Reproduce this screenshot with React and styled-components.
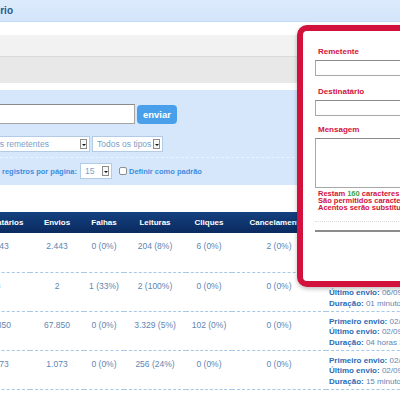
import React from "react";
import styled, { createGlobalStyle } from "styled-components";

const GlobalStyle = createGlobalStyle`
  html, body {
    margin: 0;
    padding: 0;
    background: #fff;
    overflow: hidden;
  }
  body {
    font-family: "Liberation Sans", Arial, sans-serif;
  }
`;

const rows = [
  {
    dest: "2.443",
    envios: "2.443",
    falhas: "0 (0%)",
    leituras: "204 (8%)",
    cliques: "6 (0%)",
    cancel: "2 (0%)",
    primeiro: "02/09/2013 09:12",
    ultimo: "02/09/2013 09:40",
    duracao: "28 minutos",
  },
  {
    dest: "3",
    envios: "2",
    falhas: "1 (33%)",
    leituras: "2 (100%)",
    cliques: "0 (0%)",
    cancel: "0 (0%)",
    primeiro: "06/09/2013 10:01",
    ultimo: "06/09/2013 10:02",
    duracao: "01 minutos",
  },
  {
    dest: "67.850",
    envios: "67.850",
    falhas: "0 (0%)",
    leituras: "3.329 (5%)",
    cliques: "102 (0%)",
    cancel: "0 (0%)",
    primeiro: "02/09/2013 08:00",
    ultimo: "02/09/2013 12:32",
    duracao: "04 horas 32 minutos",
  },
  {
    dest: "1.073",
    envios: "1.073",
    falhas: "0 (0%)",
    leituras: "256 (24%)",
    cliques: "0 (0%)",
    cancel: "0 (0%)",
    primeiro: "02/09/2013 14:10",
    ultimo: "02/09/2013 14:25",
    duracao: "15 minutos",
  },
];

const FakeSelect = ({ label, width, shift }) => (
  <SelectBox $width={width} $shift={shift}>
    <SelectText>{label}</SelectText>
    <SelectArrow />
  </SelectBox>
);

const App = () => {
  return (
    <Page>
      <GlobalStyle />

      <TitleBar>
        <TitleText>Relatório</TitleText>
      </TitleBar>

      <Tabs />
      <SubTabs />

      <FilterPanel>
        <SearchRow>
          <SearchInput />
          <SendButton>enviar</SendButton>
        </SearchRow>

        <SelectRow>
          <FakeSelect label="Todos os remetentes" width={125} shift={-35} />
          <FakeSelect label="Todos os tipos" width={71} />
        </SelectRow>

        <Divider />

        <PerPageRow>
          <PerPageLabel>Número de registros por página:</PerPageLabel>
          <FakeSelect label="15" width={32} />
          <Check />
          <CheckLabel>Definir como padrão</CheckLabel>
        </PerPageRow>
      </FilterPanel>

      <Table>
        <colgroup>
          <col style={{ width: 64 }} />
          <col style={{ width: 54 }} />
          <col style={{ width: 40 }} />
          <col style={{ width: 62 }} />
          <col style={{ width: 46 }} />
          <col style={{ width: 94 }} />
          <col style={{ width: 200 }} />
        </colgroup>
        <thead>
          <tr>
            <Th>Destinatários</Th>
            <Th>Envios</Th>
            <Th>Falhas</Th>
            <Th>Leituras</Th>
            <Th>Cliques</Th>
            <Th>Cancelamentos</Th>
            <Th>Informações</Th>
          </tr>
        </thead>
        <tbody>
          {rows.map((r, i) => (
            <tr key={i}>
              <Td>{r.dest}</Td>
              <Td>{r.envios}</Td>
              <Td>{r.falhas}</Td>
              <Td>{r.leituras}</Td>
              <Td>{r.cliques}</Td>
              <Td>{r.cancel}</Td>
              <InfoTd>
                <InfoLine>
                  <b>Primeiro envio:</b> {r.primeiro}
                </InfoLine>
                <InfoLine>
                  <b>Último envio:</b> {r.ultimo}
                </InfoLine>
                <InfoLine>
                  <b>Duração:</b> {r.duracao}
                </InfoLine>
              </InfoTd>
            </tr>
          ))}
        </tbody>
      </Table>

      <Modal>
        <FieldLabel>Remetente</FieldLabel>
        <TextInput />
        <FieldLabel $top={10}>Destinatário</FieldLabel>
        <TextInput />
        <FieldLabel $top={8}>Mensagem</FieldLabel>
        <MessageArea />
        <Help>
          Restam <Count>160</Count> caracteres
          <br />
          São permitidos caracteres alfanuméricos
          <br />
          Acentos serão substituídos
        </Help>
        <DottedRule />
        <SolidRule />
      </Modal>
    </Page>
  );
};

const Page = styled.div`
  position: relative;
  width: 400px;
  height: 400px;
  overflow: hidden;
`;

const TitleBar = styled.div`
  display: flex;
  align-items: center;
  height: 21px;
  background: linear-gradient(#dcebfc, #d3e5fa);
  border-bottom: 1px solid #c4daf2;
`;

const TitleText = styled.div`
  width: 100px;
  margin-left: -87px;
  text-align: right;
  white-space: nowrap;
  font-size: 10px;
  font-weight: bold;
  color: #2a5688;
`;

const Tabs = styled.div`
  margin-top: 13px;
  height: 21px;
  background: #f2f2f2;
  border-bottom: 1px solid #dadada;
`;

const SubTabs = styled.div`
  height: 26px;
  background: #e8e8e8;
  margin-bottom: 7px;
`;

const FilterPanel = styled.div`
  height: 95px;
  background: #d6e7fc;
  padding-top: 14px;
  box-sizing: border-box;
`;

const SearchRow = styled.div`
  display: flex;
  align-items: center;
  gap: 2px;
`;

const SearchInput = styled.div`
  width: 200px;
  height: 20px;
  margin-left: -65px;
  box-sizing: border-box;
  background: #fff;
  border: 1px solid #a5a5a5;
  border-top-color: #8a8a8a;
`;

const SendButton = styled.div`
  width: 40px;
  height: 19px;
  border-radius: 4px;
  background: #4a9feb;
  color: #fff;
  font-size: 9.5px;
  font-weight: bold;
  display: flex;
  align-items: center;
  justify-content: center;
`;

const SelectRow = styled.div`
  display: flex;
  gap: 2px;
  margin-top: 12px;
`;

const SelectBox = styled.div`
  display: flex;
  align-items: center;
  justify-content: space-between;
  width: ${(p) => p.$width}px;
  margin-left: ${(p) => p.$shift || 0}px;
  height: 16px;
  box-sizing: border-box;
  padding: 0 2px 0 4px;
  background: #fff;
  border: 1px solid #b3cbe4;
`;

const SelectText = styled.span`
  font-size: 8.5px;
  color: #7a9fc6;
  white-space: nowrap;
`;

const SelectArrow = styled.span`
  position: relative;
  flex: none;
  width: 7px;
  height: 10px;
  box-sizing: border-box;
  border: 1px solid #8d8d8d;
  background: #f7f7f7;
  &:after {
    content: "";
    position: absolute;
    left: 1px;
    top: 4px;
    border-left: 2px solid transparent;
    border-right: 2px solid transparent;
    border-top: 2px solid #111;
  }
`;

const Divider = styled.div`
  margin-top: 5px;
  border-top: 1px dashed #eaf3fe;
`;

const PerPageRow = styled.div`
  display: flex;
  align-items: center;
  margin-top: 5px;
`;

const PerPageLabel = styled.div`
  width: 140px;
  margin-left: -63px;
  margin-right: 3px;
  text-align: right;
  white-space: nowrap;
  font-size: 7.5px;
  font-weight: bold;
  color: #3d8de0;
`;

const Check = styled.span`
  width: 8px;
  height: 8px;
  margin-left: 7px;
  margin-right: 2px;
  box-sizing: border-box;
  border: 1px solid #8f8f8f;
  border-radius: 2px;
  background: #fff;
`;

const CheckLabel = styled.span`
  font-size: 7.5px;
  font-weight: bold;
  color: #3d8de0;
  white-space: nowrap;
`;

const Table = styled.table`
  margin-top: 27px;
  margin-left: -34px;
  border-collapse: collapse;
  table-layout: fixed;
  width: 560px;
`;

const Th = styled.th`
  height: 21px;
  padding: 0;
  background: linear-gradient(#14417f, #0a2a60);
  color: #fff;
  font-size: 8px;
  font-weight: bold;
  text-align: center;
  white-space: nowrap;
`;

const Td = styled.td`
  height: 39px;
  padding: 8px 0 0;
  vertical-align: top;
  box-sizing: border-box;
  text-align: center;
  font-size: 8.5px;
  color: #5d86b3;
  white-space: nowrap;
  border-bottom: 1px dashed #a6c8e4;
`;

const InfoTd = styled(Td)`
  text-align: left;
  padding: 5px 0 0 3px;
`;

const InfoLine = styled.div`
  font-size: 8px;
  line-height: 10.5px;
  color: #5d86b3;
  b {
    color: #2c6cb4;
  }
`;

const Modal = styled.div`
  position: absolute;
  left: 297px;
  top: 25px;
  width: 200px;
  height: 262px;
  box-sizing: border-box;
  border: 6px solid #d2123c;
  border-radius: 10px;
  background: #fff;
  padding: 15px 0 0 12px;
  box-shadow: 0 2px 4px rgba(0, 0, 0, 0.25);
`;

const FieldLabel = styled.div`
  margin-top: ${(p) => p.$top || 0}px;
  margin-bottom: 3px;
  padding-left: 3px;
  font-size: 8px;
  line-height: 11px;
  font-weight: bold;
  color: #d2123c;
`;

const TextInput = styled.div`
  height: 16px;
  box-sizing: border-box;
  border: 1px solid #a8a8a8;
  border-top-color: #8a8a8a;
  background: #fff;
`;

const MessageArea = styled(TextInput)`
  height: 50px;
`;

const Help = styled.div`
  margin-top: 2px;
  padding-left: 3px;
  font-size: 7.5px;
  line-height: 7px;
  font-weight: bold;
  color: #d2123c;
  white-space: nowrap;
`;

const Count = styled.span`
  color: #3ea43e;
`;

const DottedRule = styled.div`
  margin-top: 10px;
  border-top: 1px dotted #dcdcdc;
`;

const SolidRule = styled.div`
  margin-top: 8px;
  border-top: 2px solid #8c8c8c;
`;

export default App;
